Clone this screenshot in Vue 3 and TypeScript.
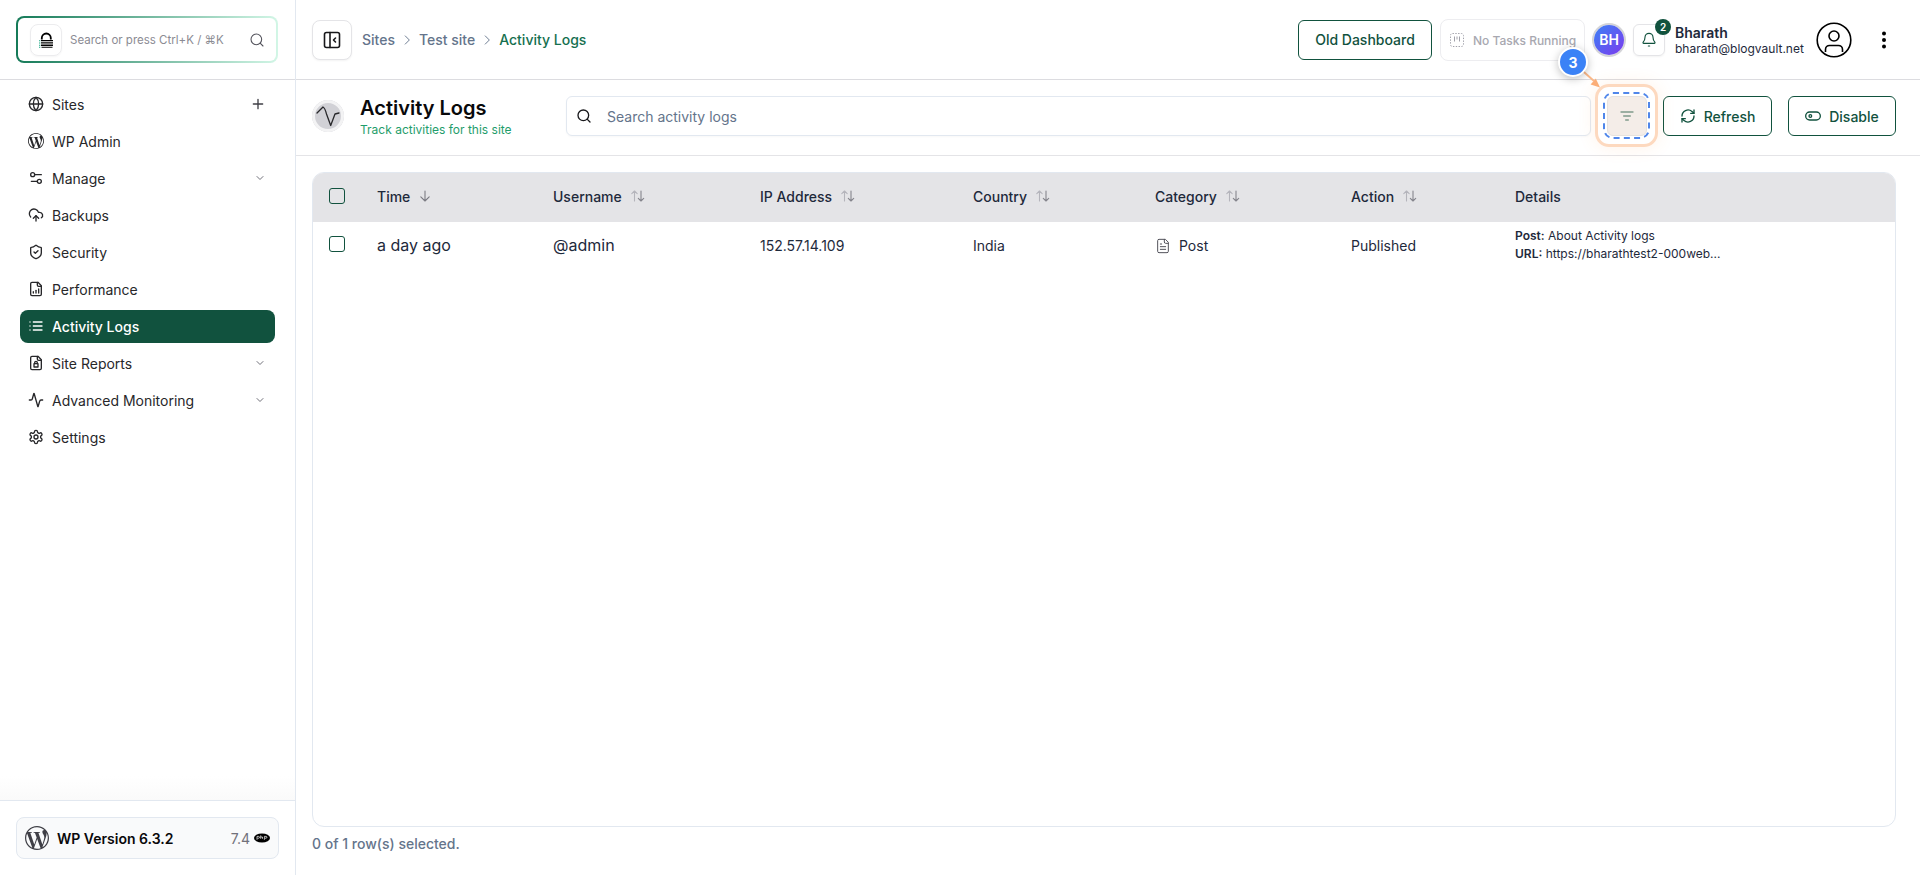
<script setup lang="ts">
interface Icon { d: string[]; fill?: boolean }
const wp = 'M21.469 6.825c.84 1.537 1.318 3.3 1.318 5.175 0 3.979-2.156 7.456-5.363 9.325l3.295-9.527c.615-1.54.82-2.771.82-3.864 0-.405-.026-.78-.07-1.11m-7.981.105c.647-.03 1.232-.105 1.232-.105.582-.075.514-.93-.067-.899 0 0-1.755.135-2.88.135-1.064 0-2.85-.15-2.85-.15-.585-.03-.661.855-.075.885 0 0 .54.061 1.125.09l1.68 4.605-2.37 7.08L5.354 6.9c.649-.03 1.234-.1 1.234-.1.585-.075.516-.93-.065-.896 0 0-1.746.138-2.874.138-.2 0-.438-.008-.69-.015C4.911 3.15 8.235 1.215 12 1.215c2.809 0 5.365 1.072 7.286 2.833-.046-.003-.091-.009-.141-.009-1.06 0-1.812.923-1.812 1.914 0 .89.513 1.643 1.06 2.531.411.72.89 1.643.89 2.977 0 .915-.354 1.994-.821 3.479l-1.075 3.585-3.9-11.61.001.014zM12 22.784c-1.059 0-2.081-.153-3.048-.437l3.237-9.406 3.315 9.087c.024.053.05.101.078.149-1.12.393-2.325.609-3.582.609M1.211 12c0-1.564.336-3.05.935-4.39L7.29 21.709C3.694 19.96 1.212 16.271 1.211 12M12 0C5.385 0 0 5.385 0 12s5.385 12 12 12 12-5.385 12-12S18.615 0 12 0'
const icons: Record<string, Icon> = {
  globe: { d: ['M12 2a10 10 0 1 0 0 20a10 10 0 1 0 0-20z', 'M12 2a14.5 14.5 0 0 0 0 20a14.5 14.5 0 0 0 0-20z', 'M2 12h20'] },
  wp: { d: [wp], fill: true },
  sliders: { d: ['M20 7h-9', 'M14 17H5', 'M17 14a3 3 0 1 0 0 6a3 3 0 1 0 0-6z', 'M7 4a3 3 0 1 0 0 6a3 3 0 1 0 0-6z'] },
  cloud: { d: ['M12 13v8', 'M4 14.9A7 7 0 1 1 15.7 8h1.8a4.5 4.5 0 0 1 2.5 8.2', 'M8 17l4-4 4 4'] },
  shield: { d: ['M20 13c0 5-3.5 7.5-7.66 8.95a1 1 0 0 1-.67-.01C7.5 20.5 4 18 4 13V6a1 1 0 0 1 1-1c2 0 4.5-1.2 6.24-2.72a1.17 1.17 0 0 1 1.52 0C14.51 3.81 17 5 19 5a1 1 0 0 1 1 1z', 'M9 12l2 2 4-4'] },
  perf: { d: ['M15 2H6a2 2 0 0 0-2 2v16a2 2 0 0 0 2 2h12a2 2 0 0 0 2-2V7z', 'M14 2v4a2 2 0 0 0 2 2h4', 'M8 18v-2', 'M12 18v-4', 'M16 18v-6'] },
  list: { d: ['M3 6h.01', 'M8 6h13', 'M3 12h.01', 'M8 12h13', 'M3 18h.01', 'M8 18h13'] },
  report: { d: ['M15 2H6a2 2 0 0 0-2 2v16a2 2 0 0 0 2 2h12a2 2 0 0 0 2-2V7z', 'M14 2v4a2 2 0 0 0 2 2h4', 'M9 13h6v5H9z', 'M10 13v-1.5a2 2 0 0 1 4 0V13'] },
  activity: { d: ['M22 12h-2.5a2 2 0 0 0-1.9 1.5l-2.4 8.3a.25.25 0 0 1-.48 0L9.2 2.2a.25.25 0 0 0-.48 0l-2.3 8.3A2 2 0 0 1 4.5 12H2'] },
  gear: { d: ['M12.22 2h-.44a2 2 0 0 0-2 2v.18a2 2 0 0 1-1 1.73l-.43.25a2 2 0 0 1-2 0l-.15-.08a2 2 0 0 0-2.73.73l-.22.38a2 2 0 0 0 .73 2.73l.15.1a2 2 0 0 1 1 1.72v.51a2 2 0 0 1-1 1.74l-.15.09a2 2 0 0 0-.73 2.73l.22.38a2 2 0 0 0 2.73.73l.15-.08a2 2 0 0 1 2 0l.43.25a2 2 0 0 1 1 1.73V20a2 2 0 0 0 2 2h.44a2 2 0 0 0 2-2v-.18a2 2 0 0 1 1-1.73l.43-.25a2 2 0 0 1 2 0l.15.08a2 2 0 0 0 2.73-.73l.22-.39a2 2 0 0 0-.73-2.73l-.15-.08a2 2 0 0 1-1-1.74v-.5a2 2 0 0 1 1-1.74l.15-.09a2 2 0 0 0 .73-2.73l-.22-.38a2 2 0 0 0-2.73-.73l-.15.08a2 2 0 0 1-2 0l-.43-.25a2 2 0 0 1-1-1.73V4a2 2 0 0 0-2-2z', 'M12 9a3 3 0 1 0 0 6a3 3 0 1 0 0-6z'] },
}
const nav = [
  { label: 'Sites', icon: 'globe', end: 'plus' },
  { label: 'WP Admin', icon: 'wp' },
  { label: 'Manage', icon: 'sliders', end: 'chev' },
  { label: 'Backups', icon: 'cloud' },
  { label: 'Security', icon: 'shield' },
  { label: 'Performance', icon: 'perf' },
  { label: 'Activity Logs', icon: 'list', active: true },
  { label: 'Site Reports', icon: 'report', end: 'chev' },
  { label: 'Advanced Monitoring', icon: 'activity', end: 'chev' },
  { label: 'Settings', icon: 'gear' },
]
const cols = [
  { label: 'Time', sort: 'down' },
  { label: 'Username', sort: 'both' },
  { label: 'IP Address', sort: 'both' },
  { label: 'Country', sort: 'both' },
  { label: 'Category', sort: 'both' },
  { label: 'Action', sort: 'both' },
  { label: 'Details', sort: '' },
]
</script>

<template>
  <div class="page">
    <aside class="side">
      <div class="side-top">
        <div class="omni">
          <span class="logo">
            <svg width="16" height="16" viewBox="0 0 16 16">
              <path d="M3.800 7.600V6a4.500 4.500 0 0 1 9 0v1.600" fill="none" stroke="#000" stroke-width="1.800" />
              <path d="M3 8h12v1.300H3zM3 10.300h12v1.300H3zM3 12.600h12v1.300H3zM3.500 14.800h11v1H3.500z" fill="#000" />
              <path d="M1 8.200h1.300v1H1zM1 10.500h1.300v1H1zM1 12.800h1.300v1H1zM1 14.800h1.300v1H1z" fill="#1aa683" />
            </svg>
          </span>
          <span class="omni-text">Search or press Ctrl+K / ⌘K</span>
          <svg class="omni-ico" width="16" height="16" viewBox="0 0 24 24" fill="none" stroke="#52525b" stroke-width="1.600" stroke-linecap="round"><circle cx="11" cy="11" r="8" /><path d="M21 21l-4.300-4.300" /></svg>
        </div>
      </div>
      <nav class="nav">
        <a v-for="n in nav" :key="n.label" class="item" :class="{ active: n.active }">
          <svg class="ico" width="16" height="16" viewBox="0 0 24 24" :fill="icons[n.icon].fill ? 'currentColor' : 'none'" :stroke="icons[n.icon].fill ? 'none' : 'currentColor'" stroke-width="2" stroke-linecap="round" stroke-linejoin="round">
            <path v-for="(p, i) in icons[n.icon].d" :key="i" :d="p" />
          </svg>
          <span class="item-label">{{ n.label }}</span>
          <svg v-if="n.end === 'plus'" class="plus" width="16" height="16" viewBox="0 0 24 24" fill="none" stroke="currentColor" stroke-width="2" stroke-linecap="round"><path d="M5 12h14M12 5v14" /></svg>
          <svg v-if="n.end === 'chev'" class="chev" width="12" height="12" viewBox="0 0 24 24" fill="none" stroke="#71717a" stroke-width="2" stroke-linecap="round" stroke-linejoin="round"><path d="M6 9l6 6 6-6" /></svg>
        </a>
      </nav>
      <div class="side-fade"></div>
      <div class="side-foot">
        <div class="ver">
          <svg width="24" height="24" viewBox="0 0 24 24" fill="#3f3f46"><path :d="wp" /></svg>
          <span class="ver-text">WP Version 6.3.2</span>
          <span class="php-num">7.4</span>
          <svg width="16" height="10" viewBox="0 0 16 10"><ellipse cx="8" cy="5" rx="8" ry="4.600" fill="#000" /><path d="M3 6.800V3.400h1.600a.8.8 0 0 1 0 1.800H3.400M6.700 2.400v3.400M6.700 4h1.800v1.800M10.400 6.800V3.400H12a.8.8 0 0 1 0 1.800h-1.200" fill="none" stroke="#fff" stroke-width=".7" /></svg>
        </div>
      </div>
    </aside>

    <main class="main">
      <header class="top">
        <button class="toggle">
          <svg width="20" height="20" viewBox="0 0 20 20" fill="none" stroke="#18181b" stroke-width="1.600" stroke-linecap="round" stroke-linejoin="round"><rect x="2.500" y="2.500" width="15" height="15" rx="2" /><path d="M8 2.500v15M13.500 8l-2 2 2 2" /></svg>
        </button>
        <div class="crumbs">
          <span>Sites</span>
          <svg width="14" height="14" viewBox="0 0 24 24" fill="none" stroke="#64748b" stroke-width="1.600" stroke-linecap="round" stroke-linejoin="round"><path d="M9 5l7 7-7 7" /></svg>
          <span>Test site</span>
          <svg width="14" height="14" viewBox="0 0 24 24" fill="none" stroke="#64748b" stroke-width="1.600" stroke-linecap="round" stroke-linejoin="round"><path d="M9 5l7 7-7 7" /></svg>
          <span class="crumb-on">Activity Logs</span>
        </div>
        <div class="top-right">
          <button class="btn old">Old Dashboard</button>
          <div class="tasks">
            <svg class="task-ico" width="14" height="14" viewBox="0 0 14 14" fill="none" stroke="#a1a1aa" stroke-width="1" stroke-dasharray="1.400 1.400"><rect x=".5" y=".5" width="13" height="13" rx="2" /><path d="M4.500 3.500v5M7 3.500v3M9.500 3.500v5" stroke-dasharray="none" /></svg>
            <span>No Tasks Running</span>
          </div>
          <div class="bh">BH</div>
          <div class="bell">
            <svg width="16" height="16" viewBox="0 0 24 24" fill="none" stroke="#11523e" stroke-width="1.700" stroke-linecap="round" stroke-linejoin="round"><path d="M11 21h2" /><path d="M3.300 15.300A1 1 0 0 0 4 17h16a1 1 0 0 0 .7-1.700C19.400 14 18 12.500 18 8A6 6 0 0 0 6 8c0 4.500-1.400 6-2.700 7.300" /></svg>
            <span class="bell-badge">2</span>
          </div>
          <div class="user">
            <div class="u-name">Bharath</div>
            <div class="u-mail">bharath@blogvault.net</div>
          </div>
          <svg class="avatar" width="36" height="36" viewBox="0 0 36 36" fill="none" stroke="#000" stroke-width="1.600"><circle cx="18" cy="18" r="16.800" /><circle cx="18" cy="14" r="5" /><path d="M9.500 30v-2.500a4 4 0 0 1 4-4h9a4 4 0 0 1 4 4V30" /></svg>
          <svg class="dots" width="24" height="24" viewBox="0 0 24 24" fill="#000"><circle cx="12" cy="5.500" r="2" /><circle cx="12" cy="12" r="2" /><circle cx="12" cy="18.500" r="2" /></svg>
        </div>
      </header>

      <section class="sub">
        <div class="title-ico">
          <svg width="24" height="24" viewBox="0 0 24 24" fill="none" stroke="#27272a" stroke-width="1.300" stroke-linecap="round" stroke-linejoin="round"><path d="M1 9L7 3Q9 4 10.500 10L14.700 21.500L19 10L23 9" /></svg>
        </div>
        <div class="title-block">
          <h1>Activity Logs</h1>
          <p>Track activities for this site</p>
        </div>
        <div class="search">
          <svg width="16" height="16" viewBox="0 0 24 24" fill="none" stroke="#18181b" stroke-width="2" stroke-linecap="round"><circle cx="11" cy="11" r="8" /><path d="M21 21l-4.300-4.300" /></svg>
          <span>Search activity logs</span>
        </div>
        <div class="filter-wrap">
          <button class="filter">
            <svg width="16" height="16" viewBox="0 0 24 24" fill="none" stroke="#7f9a8a" stroke-width="2" stroke-linecap="round"><path d="M3 6h18M7 12h10M10 18h4" /></svg>
          </button>
          <span class="ring-out"></span>
          <span class="ring-dash"></span>
          <svg class="pointer" width="40" height="40" viewBox="0 0 40 40"><path d="M3 3L21 19" stroke="#fbb98a" stroke-width="2" /><path d="M27 25.500L17.600 22.500L22.800 16.500z" fill="#fbae78" /></svg>
          <span class="step">3</span>
        </div>
        <button class="btn act w-refresh">
          <svg width="16" height="16" viewBox="0 0 24 24" fill="none" stroke="#11523e" stroke-width="2" stroke-linecap="round" stroke-linejoin="round"><path d="M3 12a9 9 0 0 1 15-6.700L21 8" /><path d="M21 3v5h-5" /><path d="M21 12a9 9 0 0 1-15 6.700L3 16" /><path d="M8 16H3v5" /></svg>
          Refresh
        </button>
        <button class="btn act w-disable">
          <svg width="16" height="16" viewBox="0 0 24 24" fill="none" stroke="#11523e" stroke-width="2" stroke-linecap="round" stroke-linejoin="round"><rect x="1" y="6" width="22" height="12" rx="6" /><circle cx="8" cy="12" r="2" /></svg>
          Disable
        </button>
      </section>

      <section class="content">
        <div class="table-wrap">
          <table>
            <colgroup>
              <col class="c0" /><col class="c1" /><col class="c2" /><col class="c3" /><col class="c4" /><col class="c5" /><col class="c6" /><col />
            </colgroup>
            <thead>
              <tr>
                <th><span class="check"></span></th>
                <th v-for="c in cols" :key="c.label">
                  <span class="th-in">
                    {{ c.label }}
                    <svg v-if="c.sort === 'down'" class="sort" width="16" height="16" viewBox="0 0 16 16" fill="none" stroke="#7c7c84" stroke-width="1.100" stroke-linecap="round" stroke-linejoin="round"><path d="M7 3v10M2.800 8.800L7 13l4.200-4.200" /></svg>
                    <svg v-if="c.sort === 'both'" class="sort" width="16" height="16" viewBox="0 0 16 16" fill="none" stroke-width="1.100" stroke-linecap="round" stroke-linejoin="round"><path d="M4.500 13V3M1.800 5.700L4.500 3l2.700 2.700" stroke="#b4b4bb" /><path d="M11 3v10M8.300 10.300L11 13l2.700-2.700" stroke="#85858d" /></svg>
                  </span>
                </th>
              </tr>
            </thead>
            <tbody>
              <tr>
                <td class="td-check"><span class="check"></span></td>
                <td class="big">a day ago</td>
                <td class="big">@admin</td>
                <td>152.57.14.109</td>
                <td>India</td>
                <td>
                  <span class="cat">
                    <svg width="16" height="16" viewBox="0 0 24 24" fill="none" stroke="#52525b" stroke-width="1.500" stroke-linecap="round" stroke-linejoin="round"><path d="M15 2H6a2 2 0 0 0-2 2v16a2 2 0 0 0 2 2h12a2 2 0 0 0 2-2V7z" /><path d="M14 2v4a2 2 0 0 0 2 2h4" /><path d="M10 9H8M16 13H8M16 17H8" /></svg>
                    Post
                  </span>
                </td>
                <td>Published</td>
                <td class="details">
                  <div><b>Post:</b> About Activity logs</div>
                  <div><b>URL:</b> https://bharathtest2-000web...</div>
                </td>
              </tr>
            </tbody>
          </table>
        </div>
        <div class="foot">0 of 1 row(s) selected.</div>
      </section>
    </main>
  </div>
</template>

<style>
html, body { margin: 0; background: #fff; }
</style>

<style scoped>
* { box-sizing: border-box; }
.page { display: flex; height: 875px; overflow: hidden; font-family: Inter, "Liberation Sans", sans-serif; color: #18181b; background: #fff; }
button { font-family: inherit; cursor: pointer; }

.side { width: 296px; flex: none; display: flex; flex-direction: column; border-right: 1px solid #e2e8f0; }
.side-top { height: 80px; padding: 16px 16px 0; border-bottom: 1px solid #dcdce0; }
.omni { width: 262px; height: 47px; display: flex; align-items: center; padding: 0 11px 0 12px; border: 2px solid transparent; border-radius: 8px; background: linear-gradient(#fff, #fff) padding-box, linear-gradient(90deg, #157a58, #d2f6e6) border-box; }
.logo { width: 32px; height: 32px; flex: none; border: 1px solid #ececee; border-radius: 8px; display: flex; align-items: center; justify-content: center; box-shadow: 0 1px 2px rgba(0,0,0,.04); }
.omni-text { margin-left: 8px; flex: 1; font-size: 11.500px; color: #8b8b93; white-space: nowrap; }
.omni-ico { flex: none; }

.nav { flex: 1; padding: 8px 20px 0; display: flex; flex-direction: column; gap: 4px; }
.item { height: 33px; display: flex; align-items: center; gap: 8px; padding: 0 9px 1px 8px; border-radius: 8px; font-size: 14px; color: #27272a; }
.item.active { background: #11523e; color: #fff; font-weight: 500; }
.ico { flex: none; }
.item-label { flex: 1; }
.plus { color: #3f3f46; }
.side-fade { height: 24px; background: linear-gradient(#fff, #fafafa); }
.side-foot { height: 75px; padding: 16px 16px 0; border-top: 1px solid #e2e8f0; }
.ver { height: 42px; display: flex; align-items: center; padding: 0 8px; border: 1px solid #e2e8f0; border-radius: 8px; background: #f9fafb; }
.ver-text { margin-left: 8px; flex: 1; font-size: 14px; font-weight: 600; color: #09090b; }
.php-num { font-size: 14px; color: #71717a; margin-right: 4px; }

.main { flex: 1; min-width: 0; display: flex; flex-direction: column; }
.top { height: 80px; flex: none; display: flex; align-items: center; padding: 0 24px 0 16px; border-bottom: 1px solid #dcdce0; }
.toggle { width: 40px; height: 40px; border: 1px solid #e4e4e7; border-radius: 8px; background: #fff; display: flex; align-items: center; justify-content: center; box-shadow: 0 1px 2px rgba(0,0,0,.05); padding: 0; }
.crumbs { margin-left: 10px; display: flex; align-items: center; gap: 5px; font-size: 14px; font-weight: 500; color: #64748b; }
.crumb-on { color: #15704f; }
.top-right { margin-left: auto; display: flex; align-items: center; }
.btn { display: inline-flex; align-items: center; justify-content: center; height: 40px; border: 1px solid #11523e; border-radius: 6px; background: #fff; color: #11523e; font-size: 14px; font-weight: 500; padding: 0; }
.old { width: 134px; }
.tasks { width: 145px; height: 42px; margin-left: 8px; display: flex; align-items: center; gap: 9px; padding: 2px 0 0 9px; border: 1px solid #ededf0; border-radius: 8px; font-size: 12px; font-weight: 500; color: #a8a8b0; white-space: nowrap; overflow: hidden; }
.task-ico { flex: none; margin-top: -2px; }
.bh { width: 30px; height: 30px; margin-left: 9px; border-radius: 50%; display: flex; align-items: center; justify-content: center; font-size: 14px; font-weight: 600; color: #fff; background: linear-gradient(135deg, #3b82f6, #7c3aed); box-shadow: 0 0 0 2px #d4d4d8; }
.bell { position: relative; width: 32px; height: 32px; margin-left: 9px; border: 1px solid #e4e4e7; border-radius: 6px; display: flex; align-items: center; justify-content: center; box-shadow: 0 1px 2px rgba(0,0,0,.05); }
.bell-badge { position: absolute; top: -6px; right: -7px; width: 16px; height: 16px; border-radius: 50%; background: #11523e; color: #fff; font-size: 10px; font-weight: 600; display: flex; align-items: center; justify-content: center; }
.user { width: 129px; margin-left: 10px; }
.u-name { font-size: 14px; font-weight: 600; line-height: 17px; color: #1e293b; }
.u-mail { font-size: 12px; line-height: 15px; color: #1e293b; white-space: nowrap; }
.avatar { margin-left: 12px; }
.dots { margin-left: 20px; }

.sub { height: 76px; flex: none; display: flex; align-items: center; padding: 0 24px 3px 16px; border-bottom: 1px solid #e4e4e7; }
.title-ico { width: 32px; height: 32px; flex: none; border-radius: 50%; background: #d1d1d6; box-shadow: inset 0 0 0 3px #f3f3f4; display: flex; align-items: center; justify-content: center; }
.title-block { width: 206px; flex: none; margin-left: 16px; }
h1 { margin: 0; font-size: 20px; line-height: 24px; font-weight: 600; color: #09090b; }
.title-block p { margin: 2px 0 0; font-size: 12px; line-height: 15px; color: #1f9d6b; }
.search { flex: 1; height: 40px; display: flex; align-items: center; gap: 15px; padding-left: 9px; border: 1px solid #e2e8f0; border-radius: 6px; font-size: 14px; color: #64748b; box-shadow: 0 1px 2px rgba(0,0,0,.03); }
.filter-wrap { position: relative; margin-left: 16px; margin-right: 16px; width: 40px; height: 40px; flex: none; }
.filter { width: 40px; height: 40px; border: 1px solid #e6e2de; border-radius: 6px; background: #f4ede8; display: flex; align-items: center; justify-content: center; padding: 0; }
.ring-out { position: absolute; left: -12px; top: -12px; width: 63px; height: 63px; border: 3px solid #fdd9bf; border-radius: 14px; box-shadow: 0 0 18px rgba(251,146,60,.12); pointer-events: none; }
.ring-dash { position: absolute; left: -4px; top: -4px; width: 47px; height: 47px; border: 2px dashed #4f86ea; border-radius: 10px; pointer-events: none; }
.pointer { position: absolute; left: -34px; top: -34px; }
.step { position: absolute; left: -49px; top: -49px; width: 30px; height: 30px; border-radius: 50%; border: 2px solid #fff; background: #3b82f6; color: #fff; font-size: 14px; font-weight: 700; display: flex; align-items: center; justify-content: center; box-shadow: 0 2px 8px rgba(0,0,0,.25); }
.act { gap: 8px; }
.w-refresh { width: 109px; }
.w-disable { width: 108px; margin-left: 16px; }

.content { flex: 1; min-height: 0; display: flex; flex-direction: column; padding: 16px 24px 0 16px; }
.table-wrap { flex: 1; min-height: 0; border: 1px solid #e2e8f0; border-radius: 12px; overflow: hidden; }
table { width: 100%; border-collapse: collapse; table-layout: fixed; }
.c0 { width: 64px; } .c1 { width: 176px; } .c2 { width: 207px; } .c3 { width: 213px; } .c4 { width: 182px; } .c5 { width: 196px; } .c6 { width: 164px; }
thead tr { height: 49px; background: #e4e4e7; }
th { padding: 0 0 3px; text-align: left; font-size: 14px; font-weight: 500; color: #1e293b; }
th:first-child, .td-check { padding-left: 16px; }
.th-in { display: inline-flex; align-items: center; gap: 8px; }
.check { display: block; width: 16px; height: 16px; border: 1px solid #11523e; border-radius: 3px; background: transparent; }
tbody tr { height: 46px; }
td { padding: 0; font-size: 14px; color: #1e293b; }
.td-check .check { margin-top: -2px; }
.big { font-size: 16px; padding-bottom: 1px; }
.cat { display: inline-flex; align-items: center; gap: 8px; vertical-align: middle; }
.details { font-size: 12px; line-height: 18px; white-space: nowrap; }
.details b { font-weight: 600; }
.foot { height: 48px; flex: none; padding-top: 8px; font-size: 14px; font-weight: 500; color: #64748b; }
</style>
